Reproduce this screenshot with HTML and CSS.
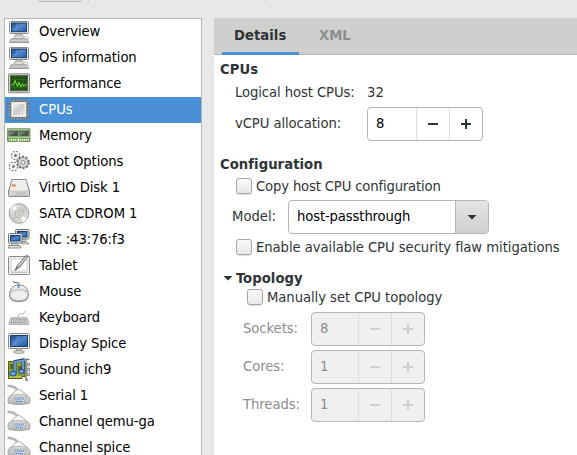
FILE: index.html
```
<!DOCTYPE html>
<html lang="en">
<head>
<meta charset="utf-8">
<title>CPUs</title>
<link rel="stylesheet" href="styles.css">
</head>
<body>
<svg class="defs" width="0" height="0" aria-hidden="true">
  <defs>
    <linearGradient id="blue" x1="0" y1="0" x2="1" y2="1"><stop offset="0" stop-color="#1c4686"/><stop offset=".5" stop-color="#4f86cc"/><stop offset="1" stop-color="#2359a4"/></linearGradient>
    <linearGradient id="metal" x1="0" y1="0" x2="1" y2="1"><stop offset="0" stop-color="#f6f6f4"/><stop offset=".5" stop-color="#c9c9c7"/><stop offset="1" stop-color="#eeeeec"/></linearGradient>
    <linearGradient id="soft" x1="0" y1="0" x2="0" y2="1"><stop offset="0" stop-color="#f7f7f6"/><stop offset="1" stop-color="#b4b6b1"/></linearGradient>
    <symbol id="computer" viewBox="0 0 24 24">
      <path d="M9 14h6l1 3H8z" fill="#d3d7cf" stroke="#888a85" stroke-width=".6"/>
      <ellipse cx="12" cy="17" rx="5.500" ry="1.300" fill="#eeeeec" stroke="#888a85" stroke-width=".6"/>
      <path d="M16 16.500q7-.3 5 2.500" fill="none" stroke="#c4c6c1"/>
      <rect x="2.500" y="1.500" width="19" height="12" rx="1" fill="#eeeeec" stroke="#888a85"/>
      <rect x="4.500" y="3" width="15" height="8.700" fill="url(#blue)" stroke="#1b3c70"/>
      <path d="M8 9l2-5h1.500l-2 5zM12 7l1.500-3H15l-2 4z" fill="#7ba7dd" opacity=".6"/>
      <path d="M4 18.800h16l1.700 3.700H2.300z" fill="#e4e5e2" stroke="#858782" stroke-width=".8"/>
      <path d="M4.500 20h15M4 21.500h16" stroke="#8b8d88" stroke-width=".7" stroke-dasharray="1.500 .6"/>
    </symbol>
    <symbol id="performance" viewBox="0 0 24 24">
      <rect x="1.500" y="1.800" width="21" height="19" rx="1" fill="#d3d7cf" stroke="#888a85"/>
      <rect x="3.500" y="3.700" width="17" height="15" fill="#205010" stroke="#555753"/>
      <path d="M4 7.500h16M4 11.500h16M4 15.500h16M8 4v14M12 4v14M16 4v14" stroke="#2f721e" stroke-width=".7"/>
      <path d="M4.500 13h2l1.500-4.500 2.500 6 1.500-4 2 4.500 1.500-3 1.500 2 1-1h2" fill="none" stroke="#73e33a" stroke-width="1"/>
    </symbol>
    <symbol id="cpu" viewBox="0 0 24 24">
      <path d="M4.200 2h17M4.200 21h17" stroke="#55585c" stroke-width="3" stroke-dasharray="1.700 1.100"/>
      <path d="M2.200 4v16.500M21.300 4v16.500" stroke="#55585c" stroke-width="3" stroke-dasharray="1.700 1.100"/>
      <path d="M4.500 2h17M4.500 21h17" stroke="#c4c5c3" stroke-width="2.200" stroke-dasharray=".8 2"/>
      <path d="M2.200 4.400v16.500M21.300 4.400v16.500" stroke="#c4c5c3" stroke-width="2.200" stroke-dasharray=".8 2"/>
      <rect x="3.800" y="3.500" width="16" height="16" rx="1" fill="#e3e3e0" stroke="#7c7d79"/>
      <rect x="5.500" y="5.200" width="12.600" height="12.600" rx="1" fill="url(#metal)" stroke="#f6f6f4"/>
    </symbol>
    <symbol id="memory" viewBox="0 0 24 24">
      <rect x=".7" y="4.800" width="22.200" height="12.700" fill="#74a565" stroke="#5d7b50" stroke-width=".8"/>
      <path d="M1 5.600h21.500" stroke="#a9bf9f"/>
      <path d="M2 7h9v5H2zM12.500 7h9v5h-9z" fill="#4c514b"/>
      <path d="M2 7.500h7l-5 4H2zM12.500 7.500h7l-5 4h-2z" fill="#747873"/>
      <path d="M1 13.300h21.500" stroke="#9dcc85" stroke-width="1.500"/>
      <path d="M2 16h8.500M13 16h9" stroke="#efe8b8" stroke-width="2" stroke-dasharray="1.300 .7"/>
      <path d="M11.700 14.500v4" stroke="#fff"/>
    </symbol>
    <symbol id="gears" viewBox="0 0 24 24">
      <g fill="#f3f3f1" stroke="#6b6d68">
        <circle cx="8.500" cy="5.500" r="3.700" stroke-width="1.900" stroke-dasharray="1.700 1.200"/>
        <circle cx="8.500" cy="5.500" r="3.300" stroke="#f1f1ef" stroke-width="1"/><circle cx="8.500" cy="5.500" r="1" fill="#777"/>
        <circle cx="6.500" cy="16.500" r="3.900" stroke-width="1.900" stroke-dasharray="1.800 1.262"/>
        <circle cx="6.500" cy="16.500" r="3.500" stroke="#f1f1ef" stroke-width="1"/><circle cx="6.500" cy="16.500" r="1" fill="#777"/>
        <circle cx="16" cy="12.500" r="5.700" stroke-width="2" stroke-dasharray="2.100 1.482"/>
        <circle cx="16" cy="12.500" r="5" fill="#d7d9d4" stroke-width=".6"/><circle cx="16" cy="12.500" r="2" fill="#fff" stroke-width=".8"/>
      </g>
    </symbol>
    <symbol id="disk" viewBox="0 0 24 24">
      <path d="M5 3.500h14l3.500 11.500v4.500q0 1-1 1h-19q-1 0-1-1V15z" fill="url(#soft)" stroke="#888a85"/>
      <path d="M5.800 4.500h12.400L21 14.500H3z" fill="#eeeeec"/>
      <path d="M2 15.500h20v4H2z" fill="#d2d3cf"/>
      <path d="M10 16v3M12 16v3M14 16v3M16 16v3M18 16v3" stroke="#b0b2ad" stroke-width=".8"/>
      <path d="M5 9.500h3.500" stroke="#e47b2d" stroke-width="2"/>
    </symbol>
    <symbol id="disc" viewBox="0 0 24 24">
      <circle cx="12" cy="11.500" r="9.800" fill="url(#metal)" stroke="#92948f" stroke-width=".9"/>
      <path d="M12 11.500L4 6a10 10 0 0 1 4-3zM12 11.500l8 5.500a10 10 0 0 1-4 3z" fill="#fff" opacity=".8"/>
      <circle cx="12" cy="11.500" r="4" fill="#dedfd8" stroke="#b5b7b1"/>
      <circle cx="12" cy="11.500" r="1.600" fill="#fff" stroke="#999b96"/>
    </symbol>
    <symbol id="network" viewBox="0 0 24 24">
      <path d="M14 11h4l1 2.500h-6z" fill="#ddd" stroke="#777" stroke-width=".7"/><path d="M14 14h6.500l1.500 2h-7z" fill="#e3e4df" stroke="#777974" stroke-width=".7"/>
      <rect x="8.500" y="1.500" width="13.500" height="9.500" rx="1" fill="#e3e4df" stroke="#73756f"/><rect x="10.500" y="3.500" width="9.500" height="5.500" fill="url(#blue)" stroke="#183d77"/>
      <path d="M5 15h5l1 2.500H4z" fill="#ddd" stroke="#777" stroke-width=".7"/>
      <rect x="1.500" y="5.500" width="13.500" height="9.500" rx="1" fill="#eeeeec" stroke="#73756f"/><rect x="3.500" y="7.500" width="9.500" height="5.500" fill="url(#blue)" stroke="#183d77"/>
      <path d="M2 17.500h11l1 2.500H1z" fill="#e3e4df" stroke="#777974" stroke-width=".8"/>
    </symbol>
    <symbol id="tablet" viewBox="0 0 24 24">
      <rect x="1.500" y="2.500" width="21" height="18" rx="1" fill="#eeeeec" stroke="#888a85"/>
      <rect x="4" y="5" width="16" height="12" fill="#fff" stroke="#c4c6c1" stroke-width=".7"/>
      <path d="M4 18.500h16" stroke="#c4c6c1"/>
      <path d="M8 16.500l2-4.500L18.500 2q2-1.500 2.500.5L12.800 13z" fill="#8d8f8b" stroke="#5b5d5a" stroke-width=".8"/>
      <path d="M11 12.500L19.300 3" stroke="#dededc" stroke-width="1.200"/>
    </symbol>
    <symbol id="mouse" viewBox="0 0 24 24">
      <path d="M6 1.500c3 3 5-1 5.500 3" fill="none" stroke="#777974" stroke-width="1.100"/>
      <path d="M2.500 14.500C2.500 9 6 5 12 5S21.500 9 21.500 14.500 18 21.500 12 21.500s-9.500-1.500-9.500-7z" fill="url(#soft)" stroke="#888a85"/>
      <path d="M4 11.500q8-4 16 0" fill="none" stroke="#b0b2ad" stroke-width=".8"/>
      <path d="M11.700 3.500v4.500" stroke="#5d94d6" stroke-width="1.800"/>
      <ellipse cx="12" cy="15.500" rx="8" ry="4.500" fill="#f4f4f2" opacity=".85"/>
    </symbol>
    <symbol id="keyboard" viewBox="0 0 24 24">
      <path d="M11 11q-1-3 3-3t4-3" fill="none" stroke="#b4b6b1"/>
      <path d="M4 11.800h16l2 5.500v1H2v-1z" fill="#e4e5e2" stroke="#92948f" stroke-width=".8"/>
      <path d="M4.500 13.200h15M4 15h16M3.500 16.800h17" stroke="#7c7e79" stroke-width="1" stroke-dasharray="1.500 .6"/>
    </symbol>
    <symbol id="display" viewBox="0 0 24 24">
      <path d="M9.500 16.500h5v3h-5z" fill="#c8cac5" stroke="#888a85" stroke-width=".7"/>
      <ellipse cx="12" cy="20" rx="5.500" ry="1.300" fill="#eeeeec" stroke="#777974" stroke-width=".8"/>
      <rect x="1.500" y="1.500" width="21" height="15" rx="1" fill="#eeeeec" stroke="#888a85"/>
      <rect x="3.500" y="3.500" width="17" height="11" fill="url(#blue)" stroke="#1b3c70"/>
      <path d="M6 12l4-8h3L9 13z" fill="#7ba7dd" opacity=".35"/>
    </symbol>
    <symbol id="sound" viewBox="0 0 24 24">
      <path d="M1.500 3.500H18v15h-3v2H1.500z" fill="#93a52b" stroke="#4f5d12"/>
      <path d="M3 6h3v5H3zM11 8h5v5h-5z" fill="#5b6328"/><path d="M3 19h12" stroke="#e4dc7c" stroke-width="1.600" stroke-dasharray="1.300 .7"/>
      <path d="M18 1.500h4.500M19 2v20h2" fill="none" stroke="#73756f" stroke-width="1.400"/>
      <path d="M20 5h2.500v3H20zM20 10h2.500v3H20zM20 15h2.500v2.500H20z" fill="#d3d5d0" stroke="#555753" stroke-width=".6"/>
      <path d="M8 15V3.500l8-1.500v11" fill="none" stroke="#204a87" stroke-width="3.200"/><path d="M8 15V4l8-1.500V13" fill="none" stroke="#73a5df" stroke-width="1.700"/>
      <ellipse cx="6" cy="15.500" rx="3.200" ry="2.500" fill="#6c9fdd" stroke="#204a87"/><ellipse cx="14.500" cy="13.500" rx="2.700" ry="2.200" fill="#6c9fdd" stroke="#204a87"/>
    </symbol>
    <symbol id="serial" viewBox="0 0 24 24">
      <path d="M.5 1.800q8.500.2 11 6" fill="none" stroke="#b4b6b3" stroke-width="2.400"/>
      <path d="M.8 16q.5-4 5-6.500l3.500-3.500q2-1 4 0L18 9.500q4.500 2.500 5.200 6.500l-.7 3.200q-10.500 3-21 0z" fill="url(#soft)" stroke="#a0a29e" stroke-width=".9"/>
      <path d="M6 10.500l4-4h3l5 4q-6-2.200-12 0z" fill="#f6f6f5"/>
      <path d="M2 15q3-4 6-4.300h8q4 .5 6 4.300" fill="none" stroke="#c0c2be" stroke-width="1.200"/>
      <path d="M6.500 13.300h12l-1 5.500h-10z" fill="#eff0ee" stroke="#a0a29e" stroke-width=".8"/>
      <path d="M8 15h9M8.500 17.300h8" stroke="#5d8fd0" stroke-width="1.500" stroke-dasharray="1.600 .4"/>
    </symbol>
  </defs>
</svg>
<header class="toolbar"><span class="tool-button"></span><span class="tool-sep"></span><span class="tool-sep tool-sep-far"></span></header>
<main class="window">
  <nav class="devices">
    <div class="device"><svg><use href="#computer"/></svg>Overview</div>
    <div class="device"><svg><use href="#computer"/></svg>OS information</div>
    <div class="device"><svg><use href="#performance"/></svg>Performance</div>
    <div class="device selected"><svg><use href="#cpu"/></svg>CPUs</div>
    <div class="device"><svg><use href="#memory"/></svg>Memory</div>
    <div class="device"><svg><use href="#gears"/></svg>Boot Options</div>
    <div class="device"><svg><use href="#disk"/></svg>VirtIO Disk 1</div>
    <div class="device"><svg><use href="#disc"/></svg>SATA CDROM 1</div>
    <div class="device"><svg><use href="#network"/></svg>NIC :43:76:f3</div>
    <div class="device"><svg><use href="#tablet"/></svg>Tablet</div>
    <div class="device"><svg><use href="#mouse"/></svg>Mouse</div>
    <div class="device"><svg><use href="#keyboard"/></svg>Keyboard</div>
    <div class="device"><svg><use href="#display"/></svg>Display Spice</div>
    <div class="device"><svg><use href="#sound"/></svg>Sound ich9</div>
    <div class="device"><svg><use href="#serial"/></svg>Serial 1</div>
    <div class="device"><svg><use href="#serial"/></svg>Channel qemu-ga</div>
    <div class="device last"><svg><use href="#serial"/></svg>Channel spice</div>
  </nav>
  <section class="pane">
    <div class="tabs"><div class="tab active">Details</div><div class="tab">XML</div></div>
    <div class="details">
      <h2>CPUs</h2>
      <div class="row host"><span class="label">Logical host CPUs:</span><span>32</span></div>
      <div class="row alloc"><span class="label">vCPU allocation:</span>
        <div class="spin"><span class="value">8</span><span class="step minus"></span><span class="step plus"></span></div></div>
      <h2 class="later">Configuration</h2>
      <div class="row check copy"><i class="box"></i>Copy host CPU configuration</div>
      <div class="row model"><span class="label">Model:</span>
        <div class="combo"><span class="value">host-passthrough</span><span class="drop"><i class="arrow"></i></span></div></div>
      <div class="row check"><i class="box"></i>Enable available CPU security flaw mitigations</div>
      <h2 class="later expander"><i class="arrow"></i>Topology</h2>
      <div class="row check manual"><i class="box"></i>Manually set CPU topology</div>
      <div class="topology">
        <span class="label">Sockets:</span><div class="spin off"><span class="value">8</span><span class="step minus"></span><span class="step plus"></span></div>
        <span class="label">Cores:</span><div class="spin off"><span class="value">1</span><span class="step minus"></span><span class="step plus"></span></div>
        <span class="label">Threads:</span><div class="spin off"><span class="value">1</span><span class="step minus"></span><span class="step plus"></span></div>
      </div>
    </div>
  </section>
</main>
</body>
</html>
```
FILE: styles.css
```
* { box-sizing: border-box; }
body {
  margin: 0;
  height: 455px;
  overflow: hidden;
  background: #e8e8e6;
  color: #2e3436;
  font: 14.67px/18px "DejaVu Sans Condensed", "DejaVu Sans", sans-serif;
  font-stretch: condensed;
}
.defs { display: block; height: 0; }
.toolbar { display: flex; height: 18px; padding-left: 39px; }
.tool-button {
  width: 42px; height: 2px;
  background: #dededc;
  border: 1px solid #b6b6b3; border-top: 0;
  border-radius: 0 0 3px 3px;
}
.tool-sep { width: 1px; height: 2px; margin-left: 7px; background: #cfcfcc; }
.tool-sep-far { margin-left: 176px; }
.window { display: flex; height: 437px; overflow: hidden; }
.devices {
  flex: none;
  width: 198px; height: 437px;
  margin-left: 4px;
  background: #fff;
  border: 1px solid #b6b6b3;
  border-bottom: 0;
  color: #000;
  letter-spacing: -.1px;
  overflow: hidden;
}
.device { display: flex; align-items: center; height: 26px; padding: 0 0 2px 2px; white-space: nowrap; }
.device svg { flex: none; width: 24px; height: 24px; margin: 2px 8px 0 0; }
.device.last { height: 20px; align-items: flex-start; padding-top: 3px; overflow: hidden; }
.device.last svg { margin-top: -2px; }
.selected { background: #4a90d9; color: #fff; letter-spacing: 0; }
.pane { flex: 1; min-width: 0; margin-left: 12px; background: #fff; }
.tabs {
  display: flex;
  height: 37px;
  padding-left: 8px;
  background: #cfcfcd;
  border-bottom: 1px solid #b6b6b3;
}
.tab { height: 37px; padding: 8px 12px 0; color: #8b8e8f; font-weight: bold; }
.tab + .tab { margin-left: 8px; }
.tab.active { width: 77px; color: #2e3436; border-bottom: 3px solid #4a90d9; letter-spacing: .05px; }
.details { padding: 5px 0 0 6px; white-space: nowrap; }
h2 { margin: 0; height: 18px; font: inherit; font-weight: bold; letter-spacing: .06px; }
.later { margin-top: 14px; }
.row { display: flex; align-items: center; }
.host { margin: 5px 0 0 15px; height: 18px; }
.alloc { margin: 6px 0 0 15px; }
.host .label, .alloc .label { width: 132px; letter-spacing: -.08px; }
.alloc .label, .model .label, .topology .label { padding-bottom: 2px; }
.spin, .combo {
  display: flex;
  height: 34px;
  border: 1px solid #b6b6b3;
  border-radius: 4px;
  background: #fff;
  color: #000;
  overflow: hidden;
}
.spin { width: 116px; }
.value { flex: 1; padding: 6px 0 0 8px; }
.step {
  width: 33px;
  border-left: 1px solid #dededc;
  background: linear-gradient(#2e3436, #2e3436) center / 10px 2px no-repeat;
}
.plus { background: linear-gradient(#2e3436, #2e3436) center / 10px 2px no-repeat, linear-gradient(#2e3436, #2e3436) center / 2px 10px no-repeat; }
.check { height: 16px; margin: 5px 0 0 16px; letter-spacing: -.05px; }
.copy { letter-spacing: -.15px; }
.box {
  width: 16px; height: 16px;
  margin-right: 4px;
  border: 1px solid #a5a5a1;
  border-radius: 3px;
  background: linear-gradient(#fafafa, #e8e8e6);
  box-shadow: 0 1px 1px #ddd;
}
.model { margin: 6px 0 0 12px; }
.model .label { width: 56px; }
.combo { width: 201px; letter-spacing: -.12px; }
.drop {
  display: flex; align-items: center; justify-content: center;
  width: 33px;
  border-left: 1px solid #b6b6b3;
  background: linear-gradient(#e4e4e2, #cfcfcd);
}
.arrow { width: 10px; height: 5px; background: #2e3436; clip-path: polygon(0 0, 100% 0, 50% 100%); }
.expander { display: flex; align-items: center; padding-left: 3px; }
.expander .arrow { margin-right: 3px; }
.manual { margin: 2px 0 0 27px; }
.topology {
  display: grid;
  grid-template-columns: 68px 114px;
  row-gap: 4px;
  align-items: center;
  margin: 7px 0 0 23px;
  color: #8b8e8f;
}
.topology .label { letter-spacing: -.05px; }
.spin.off { width: 114px; background: #f0f0f0; color: #8b8e8f; }
.off .step { background-image: linear-gradient(#cfcfcf, #cfcfcf); }
.off .plus { background-image: linear-gradient(#cfcfcf, #cfcfcf), linear-gradient(#cfcfcf, #cfcfcf); }
```
